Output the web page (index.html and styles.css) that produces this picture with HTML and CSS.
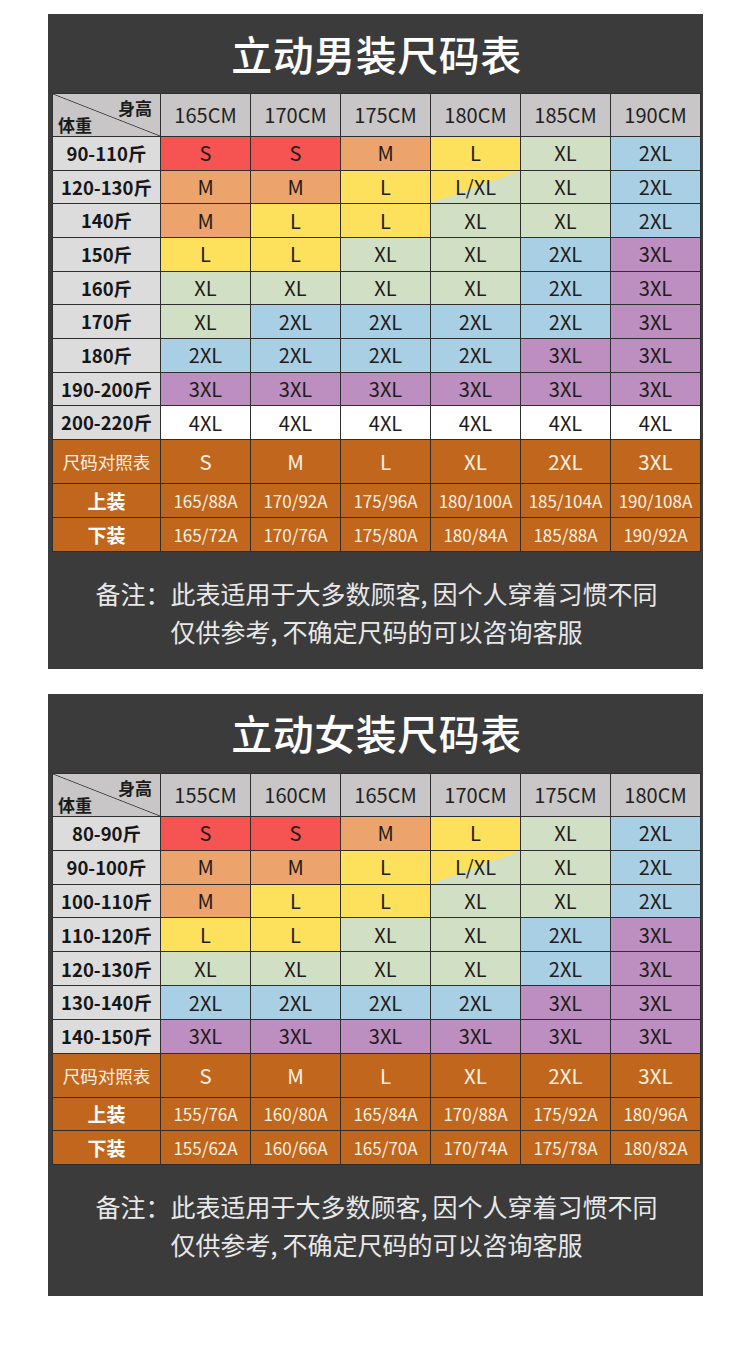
FILE: index.html
```html
<!DOCTYPE html>
<html lang="zh-CN">
<head>
<meta charset="utf-8">
<title>立动尺码表</title>
<link rel="stylesheet" href="styles.css">
</head>
<body>
<section class="panel panel-men">
  <h1 class="title">立动男装尺码表</h1>
  <div class="chart chart-men">
    <div class="corner"><span class="c-h">身高</span><span class="c-w">体重</span></div>
    <div class="hd">165CM</div><div class="hd">170CM</div><div class="hd">175CM</div><div class="hd">180CM</div><div class="hd">185CM</div><div class="hd">190CM</div>

    <div class="lbl">90-110斤</div>
    <div class="s">S</div><div class="s">S</div><div class="m">M</div><div class="l">L</div><div class="xl">XL</div><div class="x2">2XL</div>

    <div class="lbl">120-130斤</div>
    <div class="m">M</div><div class="m">M</div><div class="l">L</div><div class="lxl">L/XL</div><div class="xl">XL</div><div class="x2">2XL</div>

    <div class="lbl">140斤</div>
    <div class="m">M</div><div class="l">L</div><div class="l">L</div><div class="xl">XL</div><div class="xl">XL</div><div class="x2">2XL</div>

    <div class="lbl">150斤</div>
    <div class="l">L</div><div class="l">L</div><div class="xl">XL</div><div class="xl">XL</div><div class="x2">2XL</div><div class="x3">3XL</div>

    <div class="lbl">160斤</div>
    <div class="xl">XL</div><div class="xl">XL</div><div class="xl">XL</div><div class="xl">XL</div><div class="x2">2XL</div><div class="x3">3XL</div>

    <div class="lbl">170斤</div>
    <div class="xl">XL</div><div class="x2">2XL</div><div class="x2">2XL</div><div class="x2">2XL</div><div class="x2">2XL</div><div class="x3">3XL</div>

    <div class="lbl">180斤</div>
    <div class="x2">2XL</div><div class="x2">2XL</div><div class="x2">2XL</div><div class="x2">2XL</div><div class="x3">3XL</div><div class="x3">3XL</div>

    <div class="lbl">190-200斤</div>
    <div class="x3">3XL</div><div class="x3">3XL</div><div class="x3">3XL</div><div class="x3">3XL</div><div class="x3">3XL</div><div class="x3">3XL</div>

    <div class="lbl">200-220斤</div>
    <div class="x4">4XL</div><div class="x4">4XL</div><div class="x4">4XL</div><div class="x4">4XL</div><div class="x4">4XL</div><div class="x4">4XL</div>

    <div class="o-lbl">尺码对照表</div>
    <div class="o-size">S</div><div class="o-size">M</div><div class="o-size">L</div><div class="o-size">XL</div><div class="o-size">2XL</div><div class="o-size">3XL</div>

    <div class="o-bold">上装</div>
    <div class="o-num">165/88A</div><div class="o-num">170/92A</div><div class="o-num">175/96A</div><div class="o-num">180/100A</div><div class="o-num">185/104A</div><div class="o-num">190/108A</div>

    <div class="o-bold">下装</div>
    <div class="o-num">165/72A</div><div class="o-num">170/76A</div><div class="o-num">175/80A</div><div class="o-num">180/84A</div><div class="o-num">185/88A</div><div class="o-num">190/92A</div>
  </div>
  <div class="note">
    <p>备注：此表适用于大多数顾客,&thinsp;因个人穿着习惯不同</p>
    <p>仅供参考,&thinsp;不确定尺码的可以咨询客服</p>
  </div>
</section>

<section class="panel panel-women">
  <h1 class="title">立动女装尺码表</h1>
  <div class="chart chart-women">
    <div class="corner"><span class="c-h">身高</span><span class="c-w">体重</span></div>
    <div class="hd">155CM</div><div class="hd">160CM</div><div class="hd">165CM</div><div class="hd">170CM</div><div class="hd">175CM</div><div class="hd">180CM</div>

    <div class="lbl">80-90斤</div>
    <div class="s">S</div><div class="s">S</div><div class="m">M</div><div class="l">L</div><div class="xl">XL</div><div class="x2">2XL</div>

    <div class="lbl">90-100斤</div>
    <div class="m">M</div><div class="m">M</div><div class="l">L</div><div class="lxl">L/XL</div><div class="xl">XL</div><div class="x2">2XL</div>

    <div class="lbl">100-110斤</div>
    <div class="m">M</div><div class="l">L</div><div class="l">L</div><div class="xl">XL</div><div class="xl">XL</div><div class="x2">2XL</div>

    <div class="lbl">110-120斤</div>
    <div class="l">L</div><div class="l">L</div><div class="xl">XL</div><div class="xl">XL</div><div class="x2">2XL</div><div class="x3">3XL</div>

    <div class="lbl">120-130斤</div>
    <div class="xl">XL</div><div class="xl">XL</div><div class="xl">XL</div><div class="xl">XL</div><div class="x2">2XL</div><div class="x3">3XL</div>

    <div class="lbl">130-140斤</div>
    <div class="x2">2XL</div><div class="x2">2XL</div><div class="x2">2XL</div><div class="x2">2XL</div><div class="x3">3XL</div><div class="x3">3XL</div>

    <div class="lbl">140-150斤</div>
    <div class="x3">3XL</div><div class="x3">3XL</div><div class="x3">3XL</div><div class="x3">3XL</div><div class="x3">3XL</div><div class="x3">3XL</div>

    <div class="o-lbl">尺码对照表</div>
    <div class="o-size">S</div><div class="o-size">M</div><div class="o-size">L</div><div class="o-size">XL</div><div class="o-size">2XL</div><div class="o-size">3XL</div>

    <div class="o-bold">上装</div>
    <div class="o-num">155/76A</div><div class="o-num">160/80A</div><div class="o-num">165/84A</div><div class="o-num">170/88A</div><div class="o-num">175/92A</div><div class="o-num">180/96A</div>

    <div class="o-bold">下装</div>
    <div class="o-num">155/62A</div><div class="o-num">160/66A</div><div class="o-num">165/70A</div><div class="o-num">170/74A</div><div class="o-num">175/78A</div><div class="o-num">180/82A</div>
  </div>
  <div class="note">
    <p>备注：此表适用于大多数顾客,&thinsp;因个人穿着习惯不同</p>
    <p>仅供参考,&thinsp;不确定尺码的可以咨询客服</p>
  </div>
</section>
</body>
</html>
```

FILE: styles.css
```css
* { box-sizing: border-box; }

html, body {
  margin: 0;
  padding: 0;
  background: #ffffff;
}

body {
  font-family: "Noto Sans CJK SC", "Noto Sans", sans-serif;
  padding-top: 14px;
}

.panel {
  width: 655px;
  margin-left: 48px;
  background: #3b3b3b;
  padding: 0 2px 0 4px;
}

.panel-men {
  margin-bottom: 25px;
  padding-bottom: 19px;
}

.panel-women {
  padding-bottom: 33px;
}

.title {
  margin: 0;
  height: 79px;
  display: flex;
  align-items: center;
  justify-content: center;
  padding-bottom: 2px;
  font-size: 41px;
  font-weight: 500;
  color: #ffffff;
  letter-spacing: 0.5px;
}

.chart {
  display: grid;
  grid-template-columns: 107px repeat(6, 89px);
  gap: 1px;
  background: #2e2e2e;
  border: 1px solid #2e2e2e;
  width: 649px;
}

.chart-men {
  grid-template-rows: 42px repeat(9, 32.67px) 43px 33px 33px;
}

.chart-women {
  grid-template-rows: 42px repeat(7, 32.86px) 43px 32px 33px;
}

.chart > div {
  display: flex;
  align-items: center;
  justify-content: center;
  font-size: 20px;
  color: #1d1d1d;
  line-height: 1;
}

.chart > .hd {
  background: #c8c6c6;
  font-size: 20px;
  color: #222;
}

.chart > .corner {
  position: relative;
  background: #c8c6c6 linear-gradient(to top right, transparent calc(50% - 0.8px), #3a3a3a 50%, transparent calc(50% + 0.8px));
}

.c-h, .c-w {
  position: absolute;
  font-size: 17px;
  font-weight: 700;
  color: #1a1a1a;
  line-height: 1;
}

.c-h { top: 5px; right: 8px; }
.c-w { bottom: 3px; left: 5px; }

.chart > .lbl {
  background: #dcdcdc;
  font-weight: 700;
  font-size: 18.5px;
  color: #161616;
}

.s { background: #f65353; }
.m { background: #eca36c; }
.l { background: #fde05c; }
.xl { background: #d1e0c5; }
.x2 { background: #a8cfe3; }
.x3 { background: #bc8fc0; }
.x4 { background: #ffffff; }
.lxl { background: linear-gradient(to bottom right, #fde05c 50%, #d1e0c5 50%); }

.chart > .o-lbl,
.chart > .o-bold,
.chart > .o-size,
.chart > .o-num {
  background: #c0671d;
  color: #fcf0e2;
}

.chart > .o-lbl { font-size: 17.5px; }
.chart > .o-bold { font-size: 19px; font-weight: 700; color: #ffffff; }
.chart > .o-size { font-size: 20.5px; }
.chart > .o-num { font-size: 17px; }

.note {
  padding-top: 22px;
  text-align: center;
  color: #e8e8e8;
  font-size: 25px;
  line-height: 38px;
}

.note p {
  margin: 0;
}
```
